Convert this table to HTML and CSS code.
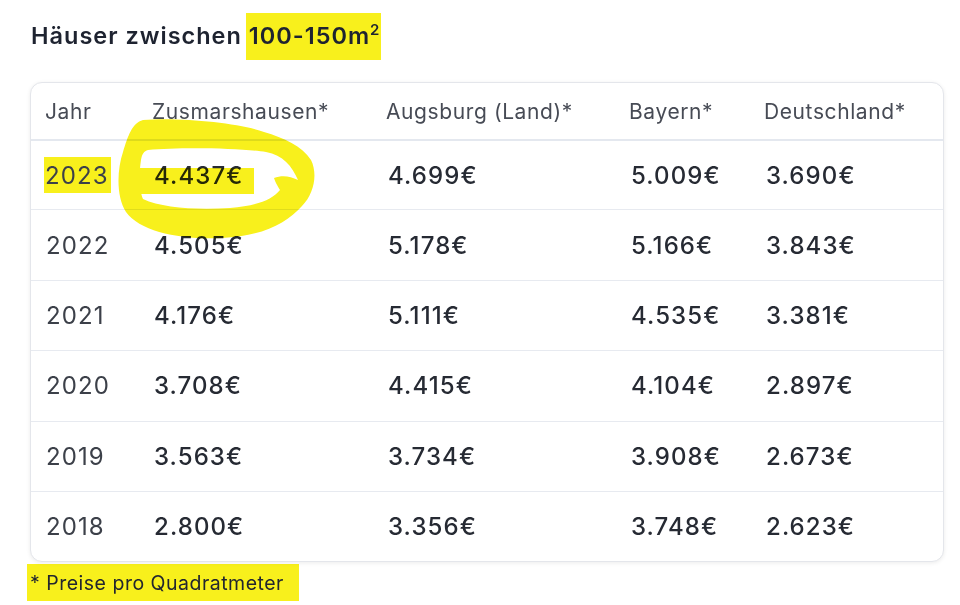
FILE: index.html
```html
<!DOCTYPE html>
<html lang="de">
<head>
<meta charset="utf-8">
<title>Häuser zwischen 100-150m²</title>
<link rel="stylesheet" href="styles.css">
</head>
<body>
<main class="page">
  <h2 class="title">Häuser zwischen <span class="hl hl-title">100-150m<sup>2</sup></span></h2>
  <div class="card">
    <div class="row head">
      <div class="cell">Jahr</div>
      <div class="cell">Zusmarshausen*</div>
      <div class="cell">Augsburg (Land)*</div>
      <div class="cell">Bayern*</div>
      <div class="cell">Deutschland*</div>
    </div>
    <div class="row">
      <div class="cell year"><span class="hl hl-year">2023</span></div>
      <div class="cell">4.437€</div>
      <div class="cell">4.699€</div>
      <div class="cell">5.009€</div>
      <div class="cell">3.690€</div>
    </div>
    <div class="row">
      <div class="cell year">2022</div>
      <div class="cell">4.505€</div>
      <div class="cell">5.178€</div>
      <div class="cell">5.166€</div>
      <div class="cell">3.843€</div>
    </div>
    <div class="row">
      <div class="cell year">2021</div>
      <div class="cell">4.176€</div>
      <div class="cell">5.111€</div>
      <div class="cell">4.535€</div>
      <div class="cell">3.381€</div>
    </div>
    <div class="row">
      <div class="cell year">2020</div>
      <div class="cell">3.708€</div>
      <div class="cell">4.415€</div>
      <div class="cell">4.104€</div>
      <div class="cell">2.897€</div>
    </div>
    <div class="row">
      <div class="cell year">2019</div>
      <div class="cell">3.563€</div>
      <div class="cell">3.734€</div>
      <div class="cell">3.908€</div>
      <div class="cell">2.673€</div>
    </div>
    <div class="row last">
      <div class="cell year">2018</div>
      <div class="cell">2.800€</div>
      <div class="cell">3.356€</div>
      <div class="cell">3.748€</div>
      <div class="cell">2.623€</div>
    </div>
    <svg class="scribble" width="210" height="130" viewBox="112 114 210 130" aria-hidden="true">
      <path fill="#f8f01c" fill-rule="evenodd" d="
        M 143 120 C 180 117, 240 123, 264 132 C 284 138, 302 146, 311 160 C 318 174, 314 194, 302 206 C 286 224, 262 236, 222 238 C 182 240, 140 232, 126 212 C 116 196, 117 170, 123 152 C 128 136, 132 123, 143 120 Z
        M 148 150 C 180 147, 240 148, 266 152 C 283 155, 292 166, 298 180 C 290 176, 282 175, 274 178 C 276 184, 279 188, 280 190 C 272 200, 256 206, 230 208 C 196 210, 162 208, 143 199 C 139 190, 139 172, 141 160 C 142 154, 144 151, 148 150 Z"/>
      <rect x="136" y="168" width="118" height="26" fill="#f8f01c"/>
    </svg>
  </div>
  <p class="note"><span class="hl hl-note">* Preise pro Quadratmeter</span></p>
</main>
</body>
</html>
```

FILE: styles.css
```css
* { box-sizing: border-box; }
html, body { margin: 0; padding: 0; background: #ffffff; }
body {
  font-family: Inter, "Noto Sans", "DejaVu Sans", sans-serif;
  color: #22262f;
}
.page {
  width: 960px;
  height: 605px;
  padding: 16px 16px 0 30px;
  overflow: hidden;
}
.title {
  margin: 0 0 26px 1px;
  font-size: 23.5px;
  font-weight: 600;
  line-height: 40px;
  height: 40px;
  color: #1e2330;
  letter-spacing: 1px;
}
.title sup {
  font-size: 15px;
  line-height: 0;
  vertical-align: 9px;
  letter-spacing: 0;
}
.hl {
  background: #f8f01c;
}
.hl-title {
  padding: 8px 2px 10px 3px;
  margin-left: -3px;
}
.card {
  position: relative;
  width: 914px;
  border: 1px solid #e4e6eb;
  border-radius: 12px;
  box-shadow: 0 1px 4px rgba(0, 0, 0, 0.08);
  background: #fff;
}
.row {
  display: grid;
  grid-template-columns: 107px 234px 243px 135px 1fr;
  padding-left: 14px;
  height: 70.4px;
  align-items: center;
  border-top: 1px solid #e7eaf0;
  font-size: 24px;
  font-weight: 500;
  color: #262a33;
  letter-spacing: 1.1px;
}
.row.head {
  border-top: none;
  height: 56px;
  font-size: 21px;
  font-weight: 400;
  color: #474b55;
  letter-spacing: 0.6px;
}
.row.head + .row { border-top: 2px solid #e4e8ef; }
.cell { white-space: nowrap; }
.cell.year { color: #3c4049; font-weight: 400; padding-left: 1px; }
.row:not(.head) .cell:not(.year) { padding-left: 2px; }
.hl-year {
  padding: 4px 2px 3px 1px;
  margin-left: -2px;
}
.scribble {
  position: absolute;
  left: 81px;
  top: 31px;
  mix-blend-mode: multiply;
  pointer-events: none;
}
.note {
  margin: 9px 0 0 0;
  font-size: 19.5px;
  color: #22262f;
  line-height: 24px;
  letter-spacing: 0.5px;
}
.hl-note {
  padding: 7px 15px 6px 3px;
  margin-left: -3px;
}
```
